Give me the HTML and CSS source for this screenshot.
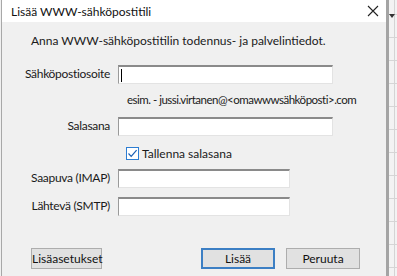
FILE: index.html
```html
<!DOCTYPE html>
<html lang="fi">
<head>
    <meta charset="UTF-8">
    <title>Lisää WWW-sähköpostitili</title>
    <link rel="stylesheet" href="styles.css">
</head>
<body>
    <div class="dialog">
        <div class="titlebar">
            <span class="title">Lisää WWW-sähköpostitili</span>
            <svg class="close" width="12" height="12" viewBox="0 0 12 12">
                <path d="M1 1 L11 11 M11 1 L1 11" stroke="#222" stroke-width="1.1" fill="none"/>
            </svg>
        </div>
        <div class="content">
            <p class="intro">Anna WWW-sähköpostitilin todennus- ja palvelintiedot.</p>

            <div class="row">
                <label class="lbl">Sähköpostiosoite</label>
                <div class="field wide"><span class="caret"></span></div>
            </div>
            <div class="hint">esim. - jussi.virtanen@&lt;omawwwsähköposti&gt;.com</div>

            <div class="row">
                <label class="lbl">Salasana</label>
                <div class="field wide"></div>
            </div>
            <div class="check-row">
                <span class="checkbox">
                    <svg width="11" height="11" viewBox="0 0 11 11">
                        <path d="M1.5 5.5 L4.2 8.3 L9.6 2.2" stroke="#1a5fb4" stroke-width="1.2" fill="none"/>
                    </svg>
                </span>
                Tallenna salasana
            </div>

            <div class="row">
                <label class="lbl">Saapuva (IMAP)</label>
                <div class="field narrow"></div>
            </div>
            <div class="row">
                <label class="lbl">Lähtevä (SMTP)</label>
                <div class="field narrow"></div>
            </div>

            <div class="buttons">
                <button class="btn">Lisäasetukset</button>
                <span class="spacer"></span>
                <button class="btn default">Lisää</button>
                <button class="btn">Peruuta</button>
            </div>
        </div>
    </div>
    <div class="sheet">
        <span class="arrow"></span>
    </div>
</body>
</html>
```

FILE: styles.css
```css
body {
    margin: 0;
    height: 276px;
    display: flex;
    background-color: #f0f0f0;
    font-family: Lato, "Segoe UI", Arial, sans-serif;
    font-size: 12px;
    color: #1a1a1a;
    overflow: hidden;
    white-space: nowrap;
}
.dialog {
    width: 384px;
    margin-left: 1px;
    border-left: 1px solid #a8a8a8;
    display: flex;
    flex-direction: column;
}
.titlebar {
    height: 22px;
    background-color: #fff;
    display: flex;
    align-items: center;
    padding-left: 9px;
    padding-right: 6px;
}
.title {
    flex: 1;
    color: #111;
}
.close {
    margin-right: 1px;
}
.content {
    flex: 1;
    padding: 10px 0 0 29px;
}
.intro {
    margin: 0 0 15px;
    line-height: 17px;
}
.row {
    display: flex;
    align-items: center;
    height: 20px;
    margin-bottom: 8px;
}
.lbl {
    width: 79px;
    display: flex;
    justify-content: flex-end;
    margin-right: 8px;
    line-height: 16px;
    letter-spacing: -0.3px;
}
.field {
    height: 16px;
    background-color: #fff;
    border-top: 2px solid #8a8a8a;
    border-left: 1px solid #9a9a9a;
    border-right: 1px solid #e3e3e3;
    border-bottom: 1px solid #e3e3e3;
    position: relative;
}
.field.wide {
    width: 213px;
}
.field.narrow {
    width: 170px;
}
.caret {
    position: absolute;
    left: 2px;
    top: 2px;
    width: 1px;
    height: 13px;
    background-color: #000;
}
.hint {
    margin: 0 0 8px 96px;
    line-height: 16px;
    font-size: 11.5px;
    letter-spacing: -0.5px;
}
.check-row {
    display: flex;
    align-items: center;
    margin: 0 0 6px 95px;
    height: 18px;
}
.checkbox {
    width: 11px;
    height: 11px;
    border: 1px solid #2d7dd2;
    background-color: #fff;
    margin-right: 3px;
    display: flex;
}
.buttons {
    display: flex;
    margin-top: 32px;
    padding-right: 26px;
    gap: 11px;
}
.spacer {
    flex: 1;
}
.btn {
    font-family: inherit;
    font-size: 12px;
    color: #111;
    height: 21px;
    padding: 0;
    background-color: #e1e1e1;
    border: 1px solid #adadad;
    border-radius: 0;
}
.btn:first-child {
    width: 71px;
}
.btn.default {
    width: 74px;
    border: 2px solid #3c7fc4;
}
.buttons .btn:last-child {
    width: 74px;
}
.sheet {
    flex: 1;
    position: relative;
    border-left: 3px solid #a4a4a4;
    background-color: #f3f3f3;
    background-image:
        linear-gradient(to right, transparent 5px, #d4d4d4 5px, #d4d4d4 6px, transparent 6px),
        repeating-linear-gradient(to bottom, transparent 0, transparent 14px, #d6d6d6 14px, #d6d6d6 15px, transparent 15px, transparent 23px);
    background-position: 0 0, 0 23px;
    background-repeat: repeat-y, repeat;
}
.arrow {
    position: absolute;
    left: 0;
    top: 14px;
    border-left: 3px solid transparent;
    border-right: 3px solid transparent;
    border-top: 4px solid #333;
}
```
